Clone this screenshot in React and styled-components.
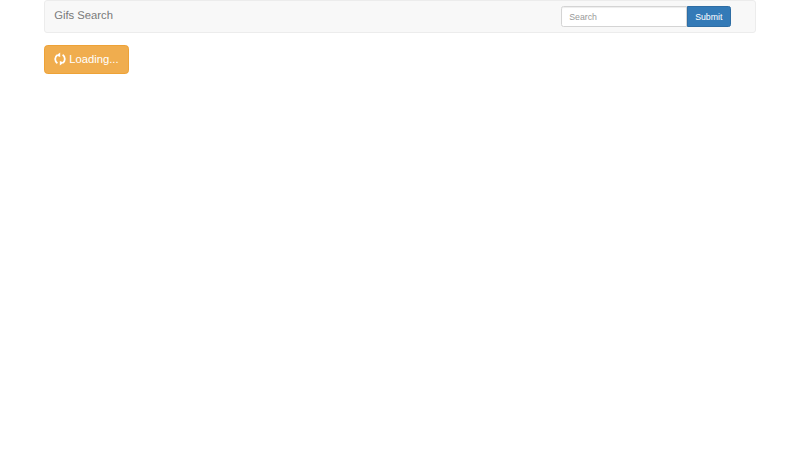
import React from 'react'
import styled, { createGlobalStyle } from 'styled-components'

const GlobalStyle = createGlobalStyle`
  html, body { margin: 0; padding: 0; background: #fff; }
  body {
    font-family: "Liberation Sans", Arial, sans-serif;
    color: #333;
    text-rendering: geometricPrecision;
  }
`

const Page = styled.div`
  padding: 0 43.75px;
`

const NavBar = styled.nav`
  display: flex;
  align-items: center;
  justify-content: space-between;
  box-sizing: border-box;
  height: 33px;
  padding: 0 24.5px 0 9.4px;
  background: #f8f8f8;
  border: 1px solid #ececec;
  border-radius: 3px;
`

const Brand = styled.a`
  font-size: 11.25px;
  line-height: 1;
  margin-top: 1px;
  color: #777;
  text-decoration: none;
`

const SearchForm = styled.form`
  display: flex;
  margin: 0;
`

const SearchInput = styled.input`
  box-sizing: border-box;
  width: 126px;
  height: 21.25px;
  padding: 0 7.5px;
  font: 8.75px "Liberation Sans", Arial, sans-serif;
  color: #555;
  background: #fff;
  border: 1px solid #d4d4d4;
  border-radius: 2.5px 0 0 2.5px;
  box-shadow: inset 0 1px 1px rgba(0, 0, 0, .075);
  outline: none;
  &::placeholder { color: #999; opacity: 1; }
`

const SubmitButton = styled.button`
  box-sizing: border-box;
  width: 44px;
  height: 21.25px;
  padding: 0;
  font: 8.75px "Liberation Sans", Arial, sans-serif;
  color: #fff;
  background: #337ab7;
  border: 1px solid #2e6da4;
  border-radius: 0 2.5px 2.5px 0;
`

const LoadingButton = styled.button`
  display: flex;
  align-items: center;
  gap: 3px;
  box-sizing: border-box;
  width: 85px;
  height: 29px;
  margin-top: 12px;
  padding: 0 0 1px 9.4px;
  font: 11.25px "Liberation Sans", Arial, sans-serif;
  color: #fff;
  background: #f0ad4e;
  border: 1px solid #eea236;
  border-radius: 3.75px;
`

const IconWrap = styled.svg`
  margin-top: -1px;
  flex: none;
`

const RefreshIcon = () => (
  <IconWrap width="12" height="14" viewBox="0 0 12 14" fill="none">
    <path d="M3.4 11.2A4.9 4.9 0 0 1 3.4 3" stroke="#fff" strokeWidth="1.8" />
    <path d="M8.6 2.8A4.9 4.9 0 0 1 8.6 11" stroke="#fff" strokeWidth="1.8" />
    <path d="M6.2 0.4L6.2 5L2.2 3.6Z" fill="#fff" />
    <path d="M5.8 13.6L5.8 9L9.8 10.4Z" fill="#fff" />
  </IconWrap>
)

export default function App() {
  return (
    <Page>
      <GlobalStyle />
      <NavBar>
        <Brand href="#">Gifs Search</Brand>
        <SearchForm onSubmit={(e) => e.preventDefault()}>
          <SearchInput placeholder="Search" />
          <SubmitButton type="submit">Submit</SubmitButton>
        </SearchForm>
      </NavBar>
      <LoadingButton>
        <RefreshIcon />
        Loading...
      </LoadingButton>
    </Page>
  )
}
